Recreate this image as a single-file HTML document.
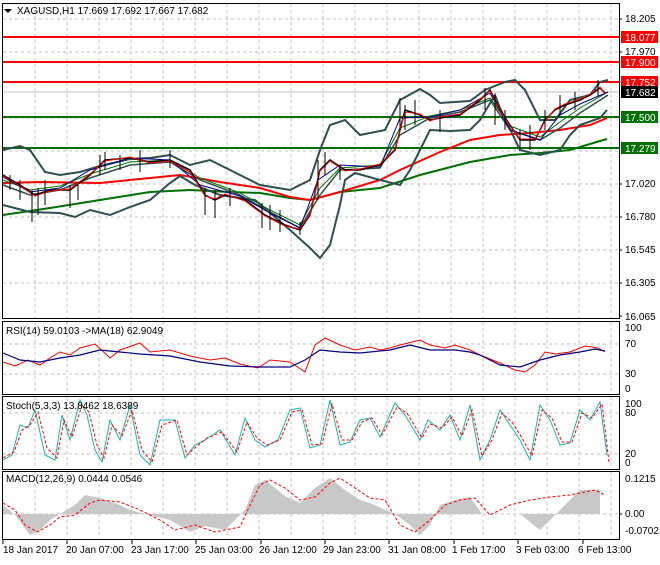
<!DOCTYPE html>
<html><head><meta charset="utf-8"><style>
body{margin:0;background:#fff;width:660px;height:560px;overflow:hidden;font-family:"Liberation Sans",sans-serif}
svg text{font-family:"Liberation Sans",sans-serif;font-size:10px}
</style></head><body>
<svg width="660" height="560" viewBox="0 0 660 560" xmlns="http://www.w3.org/2000/svg">
<rect width="660" height="560" fill="#fff"/>
<g stroke="#c0c0c0" stroke-dasharray="3,3" stroke-width="1">
<path d="M35 4V318M67 4V318M99 4V318M131 4V318M163 4V318M195 4V318M227 4V318M259 4V318M291 4V318M323 4V318M355 4V318M387 4V318M419 4V318M451 4V318M483 4V318M515 4V318M547 4V318M579 4V318M611 4V318"/>
<path d="M35 322V394M67 322V394M99 322V394M131 322V394M163 322V394M195 322V394M227 322V394M259 322V394M291 322V394M323 322V394M355 322V394M387 322V394M419 322V394M451 322V394M483 322V394M515 322V394M547 322V394M579 322V394M611 322V394"/>
<path d="M35 397V469M67 397V469M99 397V469M131 397V469M163 397V469M195 397V469M227 397V469M259 397V469M291 397V469M323 397V469M355 397V469M387 397V469M419 397V469M451 397V469M483 397V469M515 397V469M547 397V469M579 397V469M611 397V469"/>
<path d="M35 472V539M67 472V539M99 472V539M131 472V539M163 472V539M195 472V539M227 472V539M259 472V539M291 472V539M323 472V539M355 472V539M387 472V539M419 472V539M451 472V539M483 472V539M515 472V539M547 472V539M579 472V539M611 472V539"/>
<path d="M3 19H619M3 52H619M3 118H619M3 151H619M3 184H619M3 217H619M3 250H619M3 283H619"/>
<path d="M3 344H619M3 374H619M3 413H619M3 454H619M3 514H619"/>
</g>
<line x1="3" y1="92" x2="619" y2="92" stroke="#c0c0c0"/>
<g stroke-width="2">
<line x1="3" y1="37" x2="619" y2="37" stroke="#f00"/>
<line x1="3" y1="62" x2="619" y2="62" stroke="#f00"/>
<line x1="3" y1="82" x2="619" y2="82" stroke="#f00"/>
<line x1="3" y1="117" x2="619" y2="117" stroke="#007000"/>
<line x1="3" y1="148" x2="619" y2="148" stroke="#007000"/>
</g>
<polyline fill="none" stroke="#007000" stroke-width="2" points="3,215 50,208 100,200 150,192 190,190 230,192 260,193 290,198 310,200 340,192 380,188 420,175 470,162 510,155 540,153 570,150 600,141 607,139"/>
<polyline fill="none" stroke="#f00" stroke-width="2" points="3,183 40,182 100,183 150,178 180,175 220,182 260,188 290,197 310,200 340,192 380,180 400,170 440,152 470,140 500,135 530,133 560,130 590,125 607,118"/>
<polyline fill="none" stroke="#2f4f4f" stroke-width="2" points="3,150 20,146 30,150 45,172 60,175 80,172 100,166 130,159 150,158 170,155 190,165 210,160 230,170 260,185 290,190 310,180 320,150 330,125 345,120 360,135 385,130 400,100 420,89 430,95 440,103 470,101 485,90 505,82 515,80 525,90 540,120 555,120 570,100 590,95 600,82 608,80"/>
<polyline fill="none" stroke="#2f4f4f" stroke-width="2" points="3,205 30,212 60,213 75,217 90,210 110,215 130,207 150,200 170,183 180,176 195,185 220,195 255,200 290,230 310,248 320,258 330,245 340,205 345,180 355,173 380,180 400,185 410,170 430,130 450,131 470,130 480,120 495,95 500,108 520,150 540,155 560,150 570,135 580,125 600,118 607,110"/>
<polyline fill="none" stroke="#2f4f4f" stroke-width="1.5" points="3,185 30,195 60,190 90,178 130,165 170,162 200,180 240,195 270,212 300,228 320,195 340,170 380,168 400,135 430,118 460,112 490,100 510,130 540,140 560,128 580,113 608,95"/>
<polyline fill="none" stroke="#007000" stroke-width="1" points="3,180 30,190 60,186 90,174 130,162 170,160 200,178 240,193 270,210 300,225 320,188 340,168 380,165 400,128 430,116 460,110 490,98 510,126 540,137 560,122 580,108 608,92"/>
<polyline fill="none" stroke="#00008b" stroke-width="1" points="3,177 30,192 60,188 90,170 130,158 170,160 200,185 240,196 270,213 300,228 318,180 340,165 380,167 400,118 430,117 460,110 490,93 510,130 540,140 560,115 580,104 608,92"/>
<polyline fill="none" stroke="#000" stroke-width="1.5" points="3,175 20,185 35,195 50,190 70,190 90,175 105,160 130,158 150,162 170,160 190,170 205,195 215,200 225,195 245,200 265,215 285,225 300,230 310,215 320,170 330,160 345,170 360,170 380,165 395,150 405,110 420,115 430,120 440,118 460,115 480,100 490,90 500,110 510,125 520,140 535,140 545,120 555,110 565,105 580,100 590,95 600,88 605,93"/>
<polyline fill="none" stroke="#f00" stroke-width="1" points="3,176 20,186 35,196 50,191 70,189 90,174 105,161 130,157 150,163 170,161 190,172 205,196 215,199 225,194 245,201 265,216 285,226 300,229 310,214 320,171 330,161 345,171 360,169 380,164 395,149 405,112 420,114 430,121 440,117 460,114 480,99 490,91 500,111 510,126 520,139 535,139 545,121 555,109 565,104 580,99 590,94 600,87 605,94"/>
<path stroke="#000" stroke-width="1" d="M10 175V190M20 180V200M32 190V222M38 188V215M45 180V205M70 185V208M78 185V200M100 155V175M105 152V170M120 155V170M140 150V172M170 150V168M205 188V215M215 190V218M230 188V206M262 203V228M270 205V230M280 210V232M300 222V235M318 160V200M325 152V175M340 165V180M400 98V130M405 105V130M415 100V125M440 110V132M485 88V110M495 95V125M505 110V130M520 130V150M530 125V150M545 110V130M560 95V115M575 92V110M598 80V96"/>
<g fill="none" stroke="#000" stroke-width="1">
<rect x="2.5" y="3.5" width="617" height="315"/>
<rect x="2.5" y="321.5" width="617" height="73"/>
<rect x="2.5" y="396.5" width="617" height="73"/>
<rect x="2.5" y="471.5" width="617" height="68"/>
</g>
<path d="M4 9l4 4 4-4z" fill="#000"/>
<text x="17" y="14" fill="#000">XAGUSD,H1  17.669 17.692 17.667 17.682</text>
<polyline fill="none" stroke="#f00" stroke-width="1" points="3,362 15,366 28,360 40,365 50,358 60,352 70,355 80,348 95,344 110,358 120,350 140,343 150,352 170,350 190,356 210,360 225,358 240,364 258,368 270,360 290,362 305,372 315,345 325,338 340,345 355,350 370,347 380,350 390,348 400,345 420,340 430,345 445,348 455,345 470,350 480,355 500,363 515,370 525,372 535,365 545,352 555,354 570,352 585,346 598,348 605,352"/>
<polyline fill="none" stroke="#000080" stroke-width="1.2" points="3,353 20,360 40,362 60,358 80,355 100,350 120,352 140,354 170,356 200,362 230,366 260,367 290,367 305,360 320,350 340,352 360,353 390,350 410,345 430,350 455,350 470,352 480,355 500,365 520,367 540,360 560,355 580,352 595,349 605,351"/>
<text x="6" y="334">RSI(14) 59.0103  -&gt;MA(18) 62.9049</text>
<polyline fill="none" stroke="#20b2aa" stroke-width="1" points="3,460 12,455 20,425 28,428 35,410 45,455 55,460 62,415 70,440 80,400 87,415 95,450 102,462 110,420 120,440 130,405 140,455 150,465 160,420 175,420 185,458 195,445 205,440 220,430 235,455 245,418 255,440 265,447 278,440 290,410 300,408 310,448 320,445 330,400 340,445 350,442 360,420 370,418 380,437 395,403 405,415 420,440 428,420 440,430 450,415 460,440 470,405 480,460 490,440 500,410 510,425 520,440 530,460 540,405 550,420 560,445 570,443 580,410 590,420 600,402 607,455"/>
<polyline fill="none" stroke="#f00" stroke-width="1" stroke-dasharray="3,2" points="3,458 14,452 22,430 30,425 38,412 47,448 57,458 64,420 72,437 82,405 89,412 97,445 104,458 112,425 122,436 132,410 142,450 152,462 162,425 177,420 187,455 197,446 207,438 222,432 237,452 247,422 257,438 267,445 280,440 292,412 302,410 312,445 322,444 332,404 342,440 352,440 362,422 372,418 382,435 397,407 407,413 422,438 430,424 442,428 452,417 462,436 472,410 482,456 492,440 502,413 512,422 522,438 532,456 542,410 552,418 562,442 572,442 582,413 592,418 602,404 609,462"/>
<text x="6" y="409">Stoch(5,3,3) 13.8462 18.6389</text>
<polygon fill="#c8c8c8" points="3,514 3,505 15,515 30,535 40,530 50,520 60,514 75,505 85,495 100,498 120,505 130,510 145,514 170,520 190,532 205,526 225,530 245,510 255,485 265,480 285,496 300,503 315,488 330,478 345,490 360,500 375,505 385,510 395,514 410,525 420,535 430,525 440,505 455,500 470,497 482,514 600,514 600,490 580,490 560,510 540,530 520,514 500,514"/>
<polyline fill="none" stroke="#f00" stroke-width="1" stroke-dasharray="3,2" points="3,503 15,510 25,525 37,532 50,525 60,517 75,515 90,503 100,500 120,502 140,510 160,520 175,530 195,525 215,532 240,527 250,505 260,485 270,480 285,488 300,500 315,497 330,483 340,478 355,488 370,498 385,500 400,525 415,532 430,520 445,505 460,500 475,498 490,515 510,505 530,500 550,497 570,495 595,490 605,495"/>
<text x="6" y="482">MACD(12,26,9) 0.0444 0.0546</text>
<g font-size="10" fill="#000">
<text x="625" y="22">18.205</text><text x="625" y="55">17.970</text><text x="625" y="187">17.020</text><text x="625" y="220">16.780</text><text x="625" y="253">16.545</text><text x="625" y="286">16.305</text><text x="625" y="320">16.065</text>
<text x="625" y="331">100</text><text x="625" y="347">70</text><text x="625" y="377">30</text><text x="625" y="392">0</text>
<text x="625" y="407">100</text><text x="625" y="416">80</text><text x="625" y="457">20</text><text x="625" y="466">0</text>
<text x="625" y="482">0.1215</text><text x="625" y="517">0.00</text><text x="625" y="534">-0.0702</text>
</g>
<g stroke="#000"><path d="M619 19h3M619 52h3M619 184h3M619 217h3M619 250h3M619 283h3M619 316h3M619 514h3"/></g>
<rect x="621" y="31" width="37" height="12" fill="#f00"/><text x="625" y="41" fill="#fff">18.077</text>
<rect x="621" y="56" width="37" height="12" fill="#f00"/><text x="625" y="66" fill="#fff">17.900</text>
<rect x="621" y="76" width="37" height="12" fill="#f00"/><text x="625" y="86" fill="#fff">17.752</text>
<rect x="621" y="86" width="37" height="12" fill="#000"/><text x="625" y="96" fill="#fff">17.682</text>
<rect x="621" y="111" width="37" height="12" fill="#007000"/><text x="625" y="121" fill="#fff">17.500</text>
<rect x="621" y="142" width="37" height="12" fill="#007000"/><text x="625" y="152" fill="#fff">17.279</text>
<g stroke="#000"><path d="M3 540v4M67 540v4M132 540v4M196 540v4M261 540v4M325 540v4M389 540v4M454 540v4M518 540v4M583 540v4"/></g>
<g fill="#000">
<text x="3" y="553">18 Jan 2017</text><text x="66" y="553">20 Jan 07:00</text><text x="131" y="553">23 Jan 17:00</text><text x="195" y="553">25 Jan 03:00</text><text x="259" y="553">26 Jan 12:00</text><text x="323" y="553">29 Jan 23:00</text><text x="388" y="553">31 Jan 08:00</text><text x="452" y="553">1 Feb 17:00</text><text x="516" y="553">3 Feb 03:00</text><text x="578" y="553">6 Feb 13:00</text>
</g>
</svg>
</body></html>
